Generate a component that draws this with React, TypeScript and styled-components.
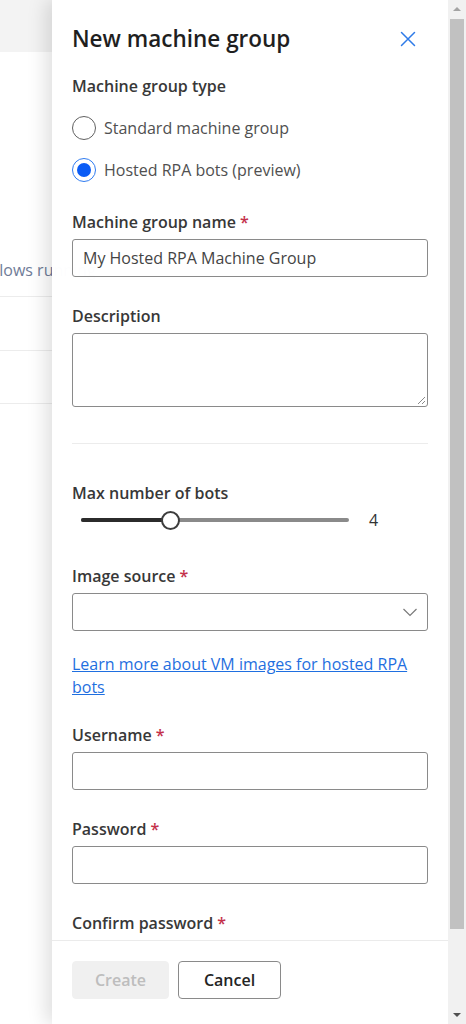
import React from "react";
import styled, { createGlobalStyle } from "styled-components";

const GlobalStyle = createGlobalStyle`
  html, body { margin: 0; padding: 0; }
  body { font-family: "Open Sans", "Noto Sans", sans-serif; background: #ffffff; }
  * { box-sizing: border-box; }
`;

const Screen = styled.div`
  position: relative;
  width: 466px;
  height: 1024px;
  overflow: hidden;
  background: #ffffff;
`;

/* ---------- background page ---------- */
const BackPage = styled.div`
  display: flex;
  flex-direction: column;
  height: 100%;
`;

const BackHeader = styled.div`
  height: 52px;
  background: #f3f3f3;
  flex-shrink: 0;
`;

const BackTable = styled.div`
  display: flex;
  flex-direction: column;
  margin-top: 199px;
`;

const BackRow = styled.div<{ $h: number; $pb?: number }>`
  display: flex;
  align-items: center;
  height: ${(p) => p.$h}px;
  padding-bottom: ${(p) => p.$pb ?? 0}px;
  border-bottom: 1px solid #ececec;
  font-size: 16px;
`;

const BackCell = styled.div<{ $w: number; $ml?: number }>`
  width: ${(p) => p.$w}px;
  margin-left: ${(p) => p.$ml ?? 0}px;
  white-space: nowrap;
  overflow: hidden;
  display: flex;
  align-items: center;
  color: #6f7c98;
`;

/* ---------- overlay ---------- */
const Overlay = styled.div`
  position: absolute;
  top: 0;
  right: 0;
  bottom: 0;
  display: flex;
`;

const Panel = styled.div`
  width: 396px;
  height: 100%;
  display: flex;
  flex-direction: column;
  background: rgba(255, 255, 255, 0.985);
  box-shadow: -6px 0 18px rgba(0, 0, 0, 0.13);
`;

const Header = styled.div`
  display: flex;
  align-items: center;
  justify-content: space-between;
  padding: 23px 20px 0 20px;
  height: 55px;
  flex-shrink: 0;
`;

const Title = styled.h1`
  margin: 0;
  font-size: 22.5px;
  line-height: 32px;
  font-weight: 600;
  color: #1f1f1f;
`;

const CloseButton = styled.button`
  border: none;
  background: transparent;
  padding: 0;
  width: 24px;
  height: 24px;
  display: flex;
  align-items: center;
  justify-content: center;
  margin-right: 8px;
  cursor: pointer;
`;

const Body = styled.div`
  flex: 1;
  overflow: hidden;
  padding: 20px 20px 0 20px;
  display: flex;
  flex-direction: column;
`;

const Label = styled.div<{ $mt?: number }>`
  font-size: 16px;
  font-weight: 600;
  line-height: 22px;
  color: #383838;
  margin-top: ${(p) => p.$mt ?? 0}px;
  margin-bottom: 6px;
  flex-shrink: 0;
`;

const Required = styled.span`
  color: #c4314b;
  margin-left: 4px;
`;

const RadioGroup = styled.div`
  display: flex;
  flex-direction: column;
  gap: 18px;
  margin-top: 13px;
  flex-shrink: 0;
`;

const RadioRow = styled.label`
  display: flex;
  align-items: center;
  gap: 8px;
  height: 24px;
  font-size: 16px;
  color: #505050;
`;

const RadioCircle = styled.span<{ $checked?: boolean }>`
  width: 24px;
  height: 24px;
  border-radius: 50%;
  border: 1.5px solid ${(p) => (p.$checked ? "#2f7bf0" : "#616161")};
  display: flex;
  align-items: center;
  justify-content: center;
  flex-shrink: 0;
  &::after {
    content: "";
    width: 14px;
    height: 14px;
    border-radius: 50%;
    background: ${(p) => (p.$checked ? "#0b5cf5" : "transparent")};
  }
`;

const TextInput = styled.div`
  height: 38px;
  border: 1px solid #8a8a8a;
  border-radius: 3px;
  display: flex;
  align-items: center;
  padding: 0 10px;
  font-size: 16px;
  color: #444;
  flex-shrink: 0;
`;

const TextArea = styled.div`
  position: relative;
  height: 74px;
  border: 1px solid #8a8a8a;
  border-radius: 3px;
  flex-shrink: 0;
`;

const ResizeGrip = styled.svg`
  position: absolute;
  right: 1px;
  bottom: 1px;
`;

const Divider = styled.div`
  height: 1px;
  background: #ececec;
  margin-top: 36px;
  flex-shrink: 0;
`;

const SliderRow = styled.div`
  display: flex;
  align-items: center;
  height: 22px;
  margin-top: -1px;
  padding-left: 9px;
  flex-shrink: 0;
`;

const Track = styled.div`
  position: relative;
  width: 268px;
  height: 4px;
  border-radius: 2px;
  background: #8a8a8a;
`;

const TrackFill = styled.div`
  position: absolute;
  left: 0;
  top: 0;
  height: 4px;
  border-radius: 2px;
  background: #2b2b2b;
`;

const Thumb = styled.div`
  position: absolute;
  top: 50%;
  width: 19px;
  height: 19px;
  margin-left: -9.5px;
  margin-top: -9.5px;
  border-radius: 50%;
  background: #fff;
  border: 2px solid #3d3d3d;
`;

const SliderValue = styled.span`
  margin-left: 20px;
  font-size: 16px;
  color: #333;
`;

const Select = styled.div`
  height: 38px;
  border: 1px solid #8a8a8a;
  border-radius: 3px;
  display: flex;
  align-items: center;
  justify-content: flex-end;
  padding-right: 9px;
  flex-shrink: 0;
`;

const Link = styled.a`
  display: block;
  margin-top: 22px;
  font-size: 16px;
  line-height: 23px;
  color: #1f6fe0;
  text-decoration: underline;
  flex-shrink: 0;
  width: 355px;
`;

const Footer = styled.div`
  height: 84px;
  flex-shrink: 0;
  border-top: 1px solid #ebebeb;
  background: #ffffff;
  display: flex;
  align-items: flex-start;
  gap: 9px;
  padding: 20px 20px 0 20px;
`;

const Button = styled.button<{ $primary?: boolean }>`
  height: 38px;
  border-radius: 4px;
  font-family: inherit;
  font-size: 16px;
  font-weight: 600;
  padding: 0;
  ${(p) =>
    p.$primary
      ? `background: #f0f0f0; border: 1px solid #f0f0f0; color: #bdbdbd; width: 97px;`
      : `background: #ffffff; border: 1px solid #8a8a8a; color: #242424; width: 103px;`}
`;

/* ---------- fake scrollbar ---------- */
const ScrollBar = styled.div`
  width: 18px;
  height: 100%;
  background: #f1f1f1;
  display: flex;
  flex-direction: column;
  align-items: center;
`;

const ScrollArrow = styled.div<{ $dir: "up" | "down"; $active?: boolean }>`
  height: 18px;
  width: 100%;
  flex-shrink: 0;
  display: flex;
  align-items: center;
  justify-content: center;
  &::after {
    content: "";
    width: 0;
    height: 0;
    border-left: 4px solid transparent;
    border-right: 4px solid transparent;
    ${(p) =>
      p.$dir === "up"
        ? `border-bottom: 4px solid ${p.$active ? "#505050" : "#a3a3a3"};`
        : `border-top: 4px solid ${p.$active ? "#505050" : "#a3a3a3"};`}
  }
`;

const ScrollTrack = styled.div`
  flex: 1;
  width: 100%;
  display: flex;
  flex-direction: column;
  align-items: center;
`;

const ScrollThumb = styled.div`
  width: 14px;
  height: 910px;
  margin-top: 1px;
  background: #c1c1c1;
`;

export default function App() {
  const min = 1;
  const max = 10;
  const value = 4;
  const pct = ((value - min) / (max - min)) * 100;

  return (
    <>
      <GlobalStyle />
      <Screen>
        <BackPage>
          <BackHeader />
          <BackTable>
            <BackRow $h={46} $pb={8}>
              <BackCell $w={124} $ml={-9}>Flows running</BackCell>
            </BackRow>
            <BackRow $h={54} />
            <BackRow $h={53} />
          </BackTable>
        </BackPage>

        <Overlay>
          <Panel>
            <Header>
              <Title>New machine group</Title>
              <CloseButton aria-label="Close">
                <svg width="16" height="16" viewBox="0 0 16 16">
                  <path d="M1.5 1.5 L14.5 14.5 M14.5 1.5 L1.5 14.5" stroke="#2f7be8" strokeWidth="1.5" strokeLinecap="round" />
                </svg>
              </CloseButton>
            </Header>

            <Body>
              <Label>Machine group type</Label>
              <RadioGroup>
                <RadioRow>
                  <RadioCircle />
                  Standard machine group
                </RadioRow>
                <RadioRow>
                  <RadioCircle $checked />
                  Hosted RPA bots (preview)
                </RadioRow>
              </RadioGroup>

              <Label $mt={29}>
                Machine group name<Required>*</Required>
              </Label>
              <TextInput>My Hosted RPA Machine Group</TextInput>

              <Label $mt={28}>Description</Label>
              <TextArea>
                <ResizeGrip width="10" height="10" viewBox="0 0 10 10">
                  <path d="M9 2 L2 9 M9 6 L6 9" stroke="#8a8a8a" strokeWidth="1" />
                </ResizeGrip>
              </TextArea>

              <Divider />

              <Label $mt={38}>Max number of bots</Label>
              <SliderRow>
                <Track>
                  <TrackFill style={{ width: `${pct}%` }} />
                  <Thumb style={{ left: `${pct}%` }} />
                </Track>
                <SliderValue>{value}</SliderValue>
              </SliderRow>

              <Label $mt={34}>
                Image source<Required>*</Required>
              </Label>
              <Select>
                <svg width="16" height="10" viewBox="0 0 16 10">
                  <path d="M1.5 2 L8 8.5 L14.5 2" fill="none" stroke="#7a7a7a" strokeWidth="1.2" />
                </svg>
              </Select>

              <Link href="#">Learn more about VM images for hosted RPA bots</Link>

              <Label $mt={25}>
                Username<Required>*</Required>
              </Label>
              <TextInput />

              <Label $mt={28}>
                Password<Required>*</Required>
              </Label>
              <TextInput />

              <Label $mt={28}>
                Confirm password<Required>*</Required>
              </Label>
              <TextInput />
            </Body>

            <Footer>
              <Button $primary disabled>Create</Button>
              <Button>Cancel</Button>
            </Footer>
          </Panel>

          <ScrollBar>
            <ScrollArrow $dir="up" />
            <ScrollTrack>
              <ScrollThumb />
            </ScrollTrack>
            <ScrollArrow $dir="down" $active />
          </ScrollBar>
        </Overlay>
      </Screen>
    </>
  );
}
